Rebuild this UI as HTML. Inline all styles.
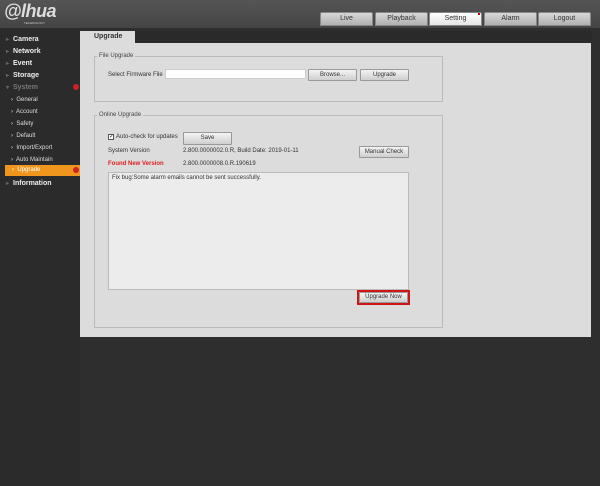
<!DOCTYPE html><html><head><style>
*{margin:0;padding:0;box-sizing:border-box}
body{width:600px;height:486px;background:#2e2e2e;font-family:"Liberation Sans",sans-serif;position:relative;overflow:hidden;font-size:6px;color:#333}
.a{position:absolute;white-space:nowrap}
.hdr{left:0;top:0;width:600px;height:28px;background:linear-gradient(#555,#444)}
.tab{top:12px;height:14px;width:53px;background:linear-gradient(#d8d8d8,#b0b0b0);border:1px solid #888;border-radius:2px 2px 0 0;text-align:center;line-height:12px;font-size:7px;color:#333}
.side div{position:absolute;left:6px;color:#eee;font-weight:bold;font-size:7px;white-space:nowrap}
.side .s{left:11px;font-weight:normal;font-size:6px;color:#ddd}
.side b{color:#666;font-size:6px;margin-right:4px}
.btn{background:linear-gradient(#f4f4f4,#cfcfcf);border:1px solid #999;border-radius:1px;text-align:center;font-size:6px;color:#333}
.fs{border:1px solid #bbb}
.lg{background:#dcdcdc;padding:0 2px;font-size:6px;color:#444}
</style></head><body>
<div class="a hdr"></div>
<div class="a" style="left:4px;top:1px;font-size:18px;font-weight:bold;font-style:italic;color:#ddd;letter-spacing:-0.5px">@lhua</div>
<div class="a" style="left:24px;top:21px;font-size:3px;color:#ccc">TECHNOLOGY</div>
<div class="a tab" style="left:320px">Live</div>
<div class="a tab" style="left:375px">Playback</div>
<div class="a tab" style="left:429px;background:linear-gradient(#fff,#e4e4e4)">Setting</div>
<div class="a" style="left:478px;top:13px;width:2px;height:2px;background:#c00"></div>
<div class="a tab" style="left:484px">Alarm</div>
<div class="a tab" style="left:538px">Logout</div>
<div class="a" style="left:0;top:28px;width:80px;height:458px;background:#2b2b2b"></div>
<div class="a" style="left:80px;top:31px;width:512px;height:12px;background:#2a2a2a"></div>
<div class="a" style="left:80px;top:31px;width:55px;height:12px;background:#dcdcdc;font-weight:bold;font-size:7px;padding:2px 0 0 14px;color:#333">Upgrade</div>
<div class="a" style="left:80px;top:43px;width:511px;height:294px;background:#dcdcdc"></div>
<div class="a side" style="left:0;top:2px">
<div style="top:34px"><b>▸</b>Camera</div><div style="top:46px"><b>▸</b>Network</div><div style="top:58px"><b>▸</b>Event</div><div style="top:70px"><b>▸</b>Storage</div>
<div style="top:82px;color:#777"><b>▾</b>System</div>
<div class="s" style="top:95px">›&nbsp; General</div><div class="s" style="top:107px">›&nbsp; Account</div><div class="s" style="top:119px">›&nbsp; Safety</div><div class="s" style="top:131px">›&nbsp; Default</div><div class="s" style="top:143px">›&nbsp; Import/Export</div><div class="s" style="top:155px">›&nbsp; Auto Maintain</div>
<div style="top:178px"><b>▸</b>Information</div>
</div>
<div class="a" style="left:73px;top:84px;width:6px;height:6px;border-radius:50%;background:#c22"></div>
<div class="a" style="left:5px;top:165px;width:75px;height:11px;background:#f0961e;color:#fff;font-size:6px;padding:2px 0 0 7px">›&nbsp; Upgrade</div>
<div class="a" style="left:73px;top:167px;width:6px;height:6px;border-radius:50%;background:#c22"></div>
<div class="a fs" style="left:94px;top:56px;width:349px;height:46px"></div>
<div class="a lg" style="left:97px;top:53px">File Upgrade</div>
<div class="a" style="left:108px;top:72px">Select Firmware File</div>
<div class="a" style="left:165px;top:69px;width:141px;height:10px;background:#fff;border:1px solid #ccc"></div>
<div class="a btn" style="left:308px;top:69px;width:49px;height:12px;line-height:10px">Browse...</div>
<div class="a btn" style="left:360px;top:69px;width:49px;height:12px;line-height:10px">Upgrade</div>
<div class="a fs" style="left:94px;top:115px;width:349px;height:213px"></div>
<div class="a lg" style="left:97px;top:112px">Online Upgrade</div>
<div class="a" style="left:108px;top:134px;width:6px;height:6px;border:1px solid #555;background:#fff;font-size:6px;line-height:4px">✓</div>
<div class="a" style="left:116px;top:134px">Auto-check for updates</div>
<div class="a btn" style="left:183px;top:132px;width:49px;height:13px;line-height:11px">Save</div>
<div class="a" style="left:108px;top:148px">System Version</div>
<div class="a" style="left:183px;top:148px">2.800.0000002.0.R, Build Date: 2019-01-11</div>
<div class="a btn" style="left:359px;top:146px;width:50px;height:12px;line-height:10px">Manual Check</div>
<div class="a" style="left:108px;top:161px;color:#e02020;font-weight:bold">Found New Version</div>
<div class="a" style="left:183px;top:161px">2.800.0000008.0.R.190619</div>
<div class="a" style="left:108px;top:172px;width:301px;height:118px;background:#ececec;border:1px solid #bbb;padding:2px 3px">Fix bug:Some alarm emails cannot be sent successfully.</div>
<div class="a" style="left:357px;top:290px;width:53px;height:15px;border:2px solid #d01515"></div>
<div class="a btn" style="left:359px;top:292px;width:49px;height:11px;line-height:9px">Upgrade Now</div>
</body></html>
